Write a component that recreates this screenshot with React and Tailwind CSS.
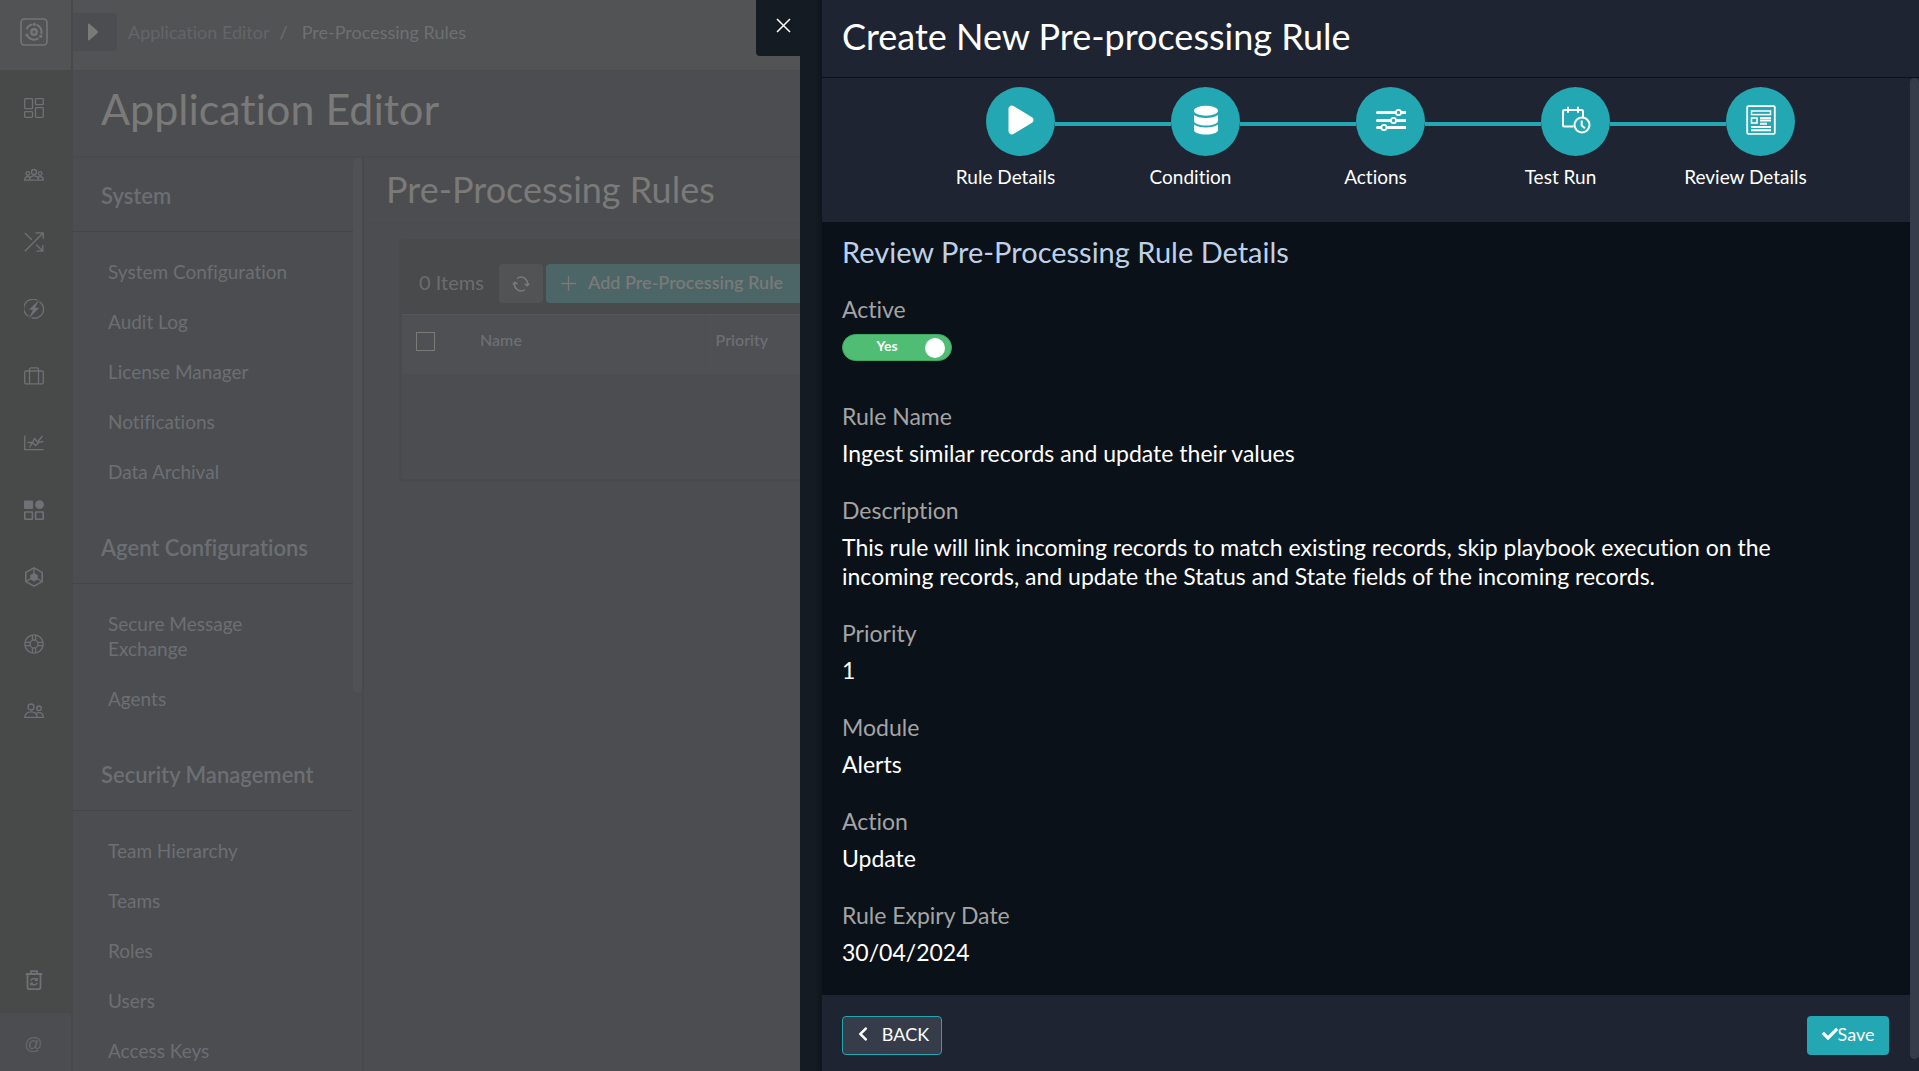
import React from "react";
import { FaChevronLeft, FaCheck } from "react-icons/fa";

function Icon({ children, size = 20, className = "" }) {
  return (
    <svg
      width={size}
      height={size}
      viewBox="0 0 20 20"
      fill="none"
      stroke="currentColor"
      strokeWidth="1.3"
      className={className}
      aria-hidden="true"
    >
      {children}
    </svg>
  );
}

const railItems = [
  {
    label: "Dashboard",
    icon: (
      <Icon>
        <rect x="0.7" y="0.7" width="7.8" height="10" rx="0.8" />
        <rect x="11.5" y="0.7" width="7.8" height="6" rx="0.8" />
        <rect x="0.7" y="13.7" width="7.8" height="5.6" rx="0.8" />
        <rect x="11.5" y="9.7" width="7.8" height="9.6" rx="0.8" />
      </Icon>
    ),
  },
  {
    label: "Queue",
    icon: (
      <Icon>
        <circle cx="10" cy="7" r="2.5" />
        <circle cx="3.8" cy="8.5" r="1.8" />
        <circle cx="16.2" cy="8.5" r="1.8" />
        <path d="M5.5 15.2c0-3 2-4.4 4.500-4.400s4.500 1.400 4.500 4.400zM5.500 15.200H.7c0-2.600 1.300-3.600 3.100-3.600 1 0 1.800.3 2.400.9M14.500 15.200h4.800c0-2.600-1.300-3.600-3.100-3.600-1 0-1.800.3-2.400.9" />
      </Icon>
    ),
  },
  {
    label: "Incident Response",
    icon: (
      <Icon>
        <path d="M.8 19.200 18.800 1.200M11.500.8h7.700v6M.8 1l7 6.800M12 12.500l6.500 6.300M18.800 13v6.200h-6.300" />
      </Icon>
    ),
  },
  {
    label: "Automation",
    icon: (
      <Icon>
        <path d="M4.500 17.300A9 9 0 0 1 13 1.300M15.500 2.700A9 9 0 0 1 7.500 18.700" />
        <path d="M15.500.5 5 10.800h4L4.800 19.500 15.200 8.800H11z" fill="currentColor" stroke="none" />
      </Icon>
    ),
  },
  {
    label: "Resources",
    icon: (
      <Icon>
        <rect x="0.7" y="5" width="18.600" height="12.800" rx="1.200" />
        <path d="M5.500 17.800V3.500c0-1 .7-1.700 1.700-1.700h5.600c1 0 1.700.7 1.700 1.700v14.300" />
      </Icon>
    ),
  },
  {
    label: "Reports",
    icon: (
      <Icon>
        <path d="M.8 2.500v14.200h18.700M3.500 9.500h5l3 3L15.500 9l4-.5M5.500 14.500l3-5 2-4 3 3.500 5-6" />
      </Icon>
    ),
  },
  {
    label: "Widgets",
    icon: (
      <Icon>
        <rect x="0" y="0.500" width="9" height="8.500" rx="0.800" fill="currentColor" stroke="none" />
        <circle cx="15.500" cy="4.700" r="4.400" fill="currentColor" stroke="none" />
        <rect x="0.800" y="12" width="7.600" height="7.200" rx="0.500" strokeWidth="1.600" />
        <rect x="11.600" y="12" width="7.600" height="7.200" rx="0.500" strokeWidth="1.600" />
      </Icon>
    ),
  },
  {
    label: "Content Hub",
    icon: (
      <Icon>
        <path d="M10 .9l8.200 4.500v9.200L10 19.100 1.800 14.600V5.400z" strokeWidth="1.600" />
        <path d="M10 6l3.800 2.100v4.200L10 14.400l-3.800-2.100V8.100z" fill="currentColor" stroke="none" />
        <path d="M10 1v6M2 14.500l5-3M18 14.500l-5-3" />
      </Icon>
    ),
  },
  {
    label: "Help",
    icon: (
      <Icon>
        <circle cx="10" cy="10" r="9.200" />
        <circle cx="10" cy="10" r="4" />
        <path d="M8.400 1v5.200M11.600 1v5.200M8.400 13.800V19M11.600 13.800V19M1 8.400h5.200M1 11.600h5.200M13.800 8.400H19M13.800 11.600H19" />
      </Icon>
    ),
  },
  {
    label: "Users",
    icon: (
      <Icon>
        <circle cx="7" cy="6" r="3" />
        <circle cx="15" cy="7.300" r="2.300" />
        <path d="M.8 16.300c0-3.700 2.700-5.500 6.200-5.500s6.200 1.800 6.200 5.500zM12 12.500c.8-.6 1.800-.9 3-.9 2.500 0 4.200 1.700 4.200 4.700h-6" />
      </Icon>
    ),
  },
];

const sections = [
  {
    title: "System",
    items: ["System Configuration", "Audit Log", "License Manager", "Notifications", "Data Archival"],
  },
  { title: "Agent Configurations", items: ["Secure Message Exchange", "Agents"] },
  {
    title: "Security Management",
    items: ["Team Hierarchy", "Teams", "Roles", "Users", "Access Keys"],
  },
];

const steps = [
  {
    label: "Rule Details",
    icon: (
      <svg width="28" height="32" viewBox="0 0 28 32" fill="currentColor" aria-hidden="true">
        <path d="M1.500 5C1.500 2.300 4.600.7 6.900 2.200L25 13.300c2 1.300 2 4.100 0 5.400L6.900 29.800c-2.300 1.500-5.400-.1-5.400-2.800z" />
      </svg>
    ),
  },
  {
    label: "Condition",
    icon: (
      <svg width="26" height="30" viewBox="0 0 26 30" fill="currentColor" aria-hidden="true">
        <ellipse cx="13" cy="5.700" rx="12" ry="5" />
        <path d="M1 10c2.500 2 7 3 12 3s9.500-1 12-3v6c0 2.600-5.400 4.500-12 4.500S1 18.600 1 16z" />
        <path d="M1 19.500c2.500 2 7 3 12 3s9.500-1 12-3V25c0 2.700-5.400 4.600-12 4.600S1 27.700 1 25z" />
      </svg>
    ),
  },
  {
    label: "Actions",
    icon: (
      <svg width="30" height="24" viewBox="0 0 30 24" fill="none" stroke="currentColor" aria-hidden="true">
        <path d="M1.500 4.500h18M26 4.500h3M1.500 12.500h13M21 12.500h8M1.500 19.500h3M12 19.500h17" strokeWidth="3" strokeLinecap="round" />
        <circle cx="22.500" cy="4.500" r="2.600" strokeWidth="1.800" />
        <circle cx="17.500" cy="12.500" r="2.600" strokeWidth="1.800" />
        <circle cx="8" cy="19.500" r="2.600" strokeWidth="1.800" />
      </svg>
    ),
  },
  {
    label: "Test Run",
    icon: (
      <svg width="30" height="28" viewBox="0 0 30 28" fill="none" stroke="currentColor" strokeWidth="2" aria-hidden="true">
        <path d="M12.500 20.500H3.500c-1 0-1.500-.6-1.500-1.500V5.500C2 4.600 2.500 4 3.500 4h17c1 0 1.500.6 1.500 1.500V11M7 .8v6M17 .8v6" />
        <circle cx="21" cy="19" r="7.500" />
        <path d="M20.700 14.500v5l3.300 2.700" />
      </svg>
    ),
  },
  {
    label: "Review Details",
    icon: (
      <svg width="30" height="30" viewBox="0 0 30 30" fill="none" stroke="currentColor" aria-hidden="true">
        <rect x="1.200" y="1.200" width="27.600" height="27.600" rx="1" strokeWidth="1.800" />
        <rect x="5.500" y="6" width="19" height="3.600" strokeWidth="1.500" />
        <rect x="5.500" y="13" width="5.500" height="5" strokeWidth="1.600" />
        <path d="M14 13h11M14 15.500h11M14 18.700h7M5 22h20M5 25.200h20" strokeWidth="2" />
      </svg>
    ),
  },
];

const fields = [
  ["Rule Name", "Ingest similar records and update their values"],
  [
    "Description",
    "This rule will link incoming records to match existing records, skip playbook execution on the incoming records, and update the Status and State fields of the incoming records.",
  ],
  ["Priority", "1"],
  ["Module", "Alerts"],
  ["Action", "Update"],
  ["Rule Expiry Date", "30/04/2024"],
];

function Rail() {
  return (
    <nav aria-label="Main" className="flex w-[73px] shrink-0 flex-col border-r-2 border-[#48494a] bg-[#484949] text-[#6e7276]">
      <a href="#home" aria-label="Home" className="flex h-[70px] shrink-0 items-center justify-center bg-[#525354] pr-1 pb-1.5 text-[#747677]">
        <svg width="28" height="28" viewBox="0 0 28 28" fill="none" stroke="currentColor" aria-hidden="true">
          <rect x="1" y="1" width="26" height="26" rx="3.500" strokeWidth="1.600" />
          <circle cx="14" cy="14" r="2.700" strokeWidth="2.400" />
          <path d="M12 6.500a7.700 7.700 0 0 0-5.400 5M16.500 6.700a7.700 7.700 0 0 1 4.800 9.500M7.300 17.800a7.700 7.700 0 0 0 11.200 2.400" strokeWidth="2" />
          <circle cx="14.200" cy="6.300" r="1.600" fill="currentColor" stroke="none" />
          <circle cx="20.700" cy="18.300" r="1.600" fill="currentColor" stroke="none" />
          <circle cx="6.900" cy="17" r="1.600" fill="currentColor" stroke="none" />
        </svg>
      </a>
      <ul className="flex flex-col pt-1">
        {railItems.map((item) => (
          <li key={item.label}>
            <a href="#module" aria-label={item.label} className="flex h-[67px] items-center justify-center pr-1">
              {item.icon}
            </a>
          </li>
        ))}
      </ul>
      <a href="#bin" aria-label="Recycle Bin" className="mt-auto flex h-[67px] shrink-0 items-center justify-center pr-1">
        <Icon>
          <path d="M1.800 4h16.400M7 4V1.200h6V4M3.500 4v13.500c0 1 .7 1.700 1.700 1.700h9.600c1 0 1.700-.7 1.700-1.700V4" strokeWidth="1.800" />
          <path d="M6.800 10.700c.5-1.600 1.700-2.200 3.200-2.200s2.300.6 3 1.700M13.200 8v2.400h-2.500M13.200 12.800c-.5 1.600-1.700 2.200-3.200 2.200s-2.300-.6-3-1.700M6.800 15.500v-2.400h2.500" />
        </Icon>
      </a>
      <a href="#contact" aria-label="Contact" className="flex h-[58px] shrink-0 items-center justify-center bg-[#4c4d50] pt-1 pr-1 font-['Liberation_Sans'] text-lg text-[#66686a]">
        @
      </a>
    </nav>
  );
}

function SettingsMenu() {
  return (
    <div className="flex w-[291px] shrink-0 overflow-hidden border-r-2 border-[#48494b]">
      <nav aria-label="Settings" className="min-w-0 flex-1 text-[#6b6f74]">
        {sections.map((section) => (
          <section key={section.title}>
            <h2 className="border-b border-[#444547] pt-[25px] pb-[23px] pl-7 text-[22px] leading-[25px] font-semibold">
              {section.title}
            </h2>
            <ul className="flex flex-col gap-[25px] pt-[27px] pr-12 pb-[26px] pl-[35px] text-[19px] leading-[25px]">
              {section.items.map((item) => (
                <li key={item}>
                  <a href="#setting" className="block">{item}</a>
                </li>
              ))}
            </ul>
          </section>
        ))}
      </nav>
      <div className="h-[535px] w-[9px] shrink-0 rounded-full bg-[#505153]" />
    </div>
  );
}

function RulesPage() {
  return (
    <main className="min-w-0 flex-1 text-[#7a7a79]">
      <h2 className="border-b border-[#4a4b4d] pt-[9px] pb-3 pl-[22px] text-4xl leading-[44px]">Pre-Processing Rules</h2>
      <div className="mt-[15px] mr-8 ml-[35px] rounded border-3 border-[#494a4c]">
        <div className="flex items-center bg-[#494a4b] pt-[22px] pb-[11px] pl-[17px] text-xl leading-[37px]">
          <span className="mr-3 w-[68px] shrink-0 pb-0.5 text-[#6c6d6e]">0 Items</span>
          <button type="button" aria-label="Refresh" className="mr-[3px] flex h-[39px] w-11 shrink-0 items-center justify-center rounded-sm bg-[#525355]">
            <svg width="18" height="18" viewBox="0 0 18 18" fill="none" stroke="currentColor" strokeWidth="1.500" aria-hidden="true">
              <path d="M5 3.500A6.500 6.500 0 0 1 15.300 10M13 14.500A6.500 6.500 0 0 1 2.700 8M.8 9.500 2.900 7.200l2.600 2M17.300 8.500l-2.100 2.300-2.600-2" />
            </svg>
          </button>
          <button type="button" className="flex h-[39px] shrink-0 items-center gap-3 rounded-sm bg-[#4c6566] pr-6 pl-[15px] text-lg font-semibold">
            <svg width="15" height="15" viewBox="0 0 15 15" stroke="currentColor" strokeWidth="1.300" aria-hidden="true">
              <path d="M7.500 0v15M0 7.500h15" />
            </svg>
            <span className="pb-1">Add Pre-Processing Rule</span>
          </button>
        </div>
        <table className="w-full table-fixed border-t border-[#55565a] text-left text-base text-[#6b6f74]">
          <thead className="bg-[#4f5053]">
            <tr className="h-[59px]">
              <th className="w-16 pb-1.5 pl-[14px]">
                <input type="checkbox" aria-label="Select all" className="block size-[19px] appearance-none border border-[#7a7a79]" />
              </th>
              <th className="w-[239px] border-r border-[#4d4e51] pb-2 pl-[14px] font-semibold">Name</th>
              <th className="pb-2 pl-[10px] font-semibold">Priority</th>
            </tr>
          </thead>
          <tbody>
            <tr className="h-[105px]">
              <td colSpan={3} />
            </tr>
          </tbody>
        </table>
      </div>
    </main>
  );
}

function Drawer() {
  return (
    <aside
      role="dialog"
      aria-label="Create New Pre-processing Rule"
      className="absolute inset-y-0 right-0 flex w-[1119px] max-w-full bg-[#141b22] text-white"
    >
      <button
        type="button"
        aria-label="Close"
        className="absolute top-0 -left-11 flex h-14 w-11 items-center justify-center rounded-bl-sm bg-[#141b22] pb-1.5 pl-2.5"
      >
        <svg width="15" height="15" viewBox="0 0 15 15" stroke="currentColor" strokeWidth="1.500" aria-hidden="true">
          <path d="M1 1l13 13M14 1L1 14" />
        </svg>
      </button>
      <div className="w-[22px] shrink-0 bg-linear-to-r from-[#141b22] from-70% to-[#0f151b]" />
      <div className="flex min-w-0 flex-1 flex-col">
        <header className="shrink-0 border-b border-[#0b1118] bg-[#1e2431] pt-[14px] pb-[19px] pl-5">
          <h1 className="text-4xl leading-[44px]">Create New Pre-processing Rule</h1>
        </header>
        <div className="flex min-h-0 flex-1 bg-[#1e2431]">
          <div className="flex min-w-0 flex-1 flex-col">
            <ol className="flex h-36 shrink-0 pt-[9px] pr-[72px] pl-[91px]">
              {steps.map((step, i) => (
                <li key={step.label} className="flex flex-1 flex-col">
                  <div className="-mr-[15px] ml-[15px] flex items-center">
                    <span className={i === 0 ? "h-1 flex-1" : "mt-1 h-1 flex-1 bg-[#23a7b2]"} />
                    <span className="flex size-[69px] items-center justify-center rounded-full bg-[#23a7b2] pb-1">{step.icon}</span>
                    <span className={i === steps.length - 1 ? "h-1 flex-1" : "mt-1 h-1 flex-1 bg-[#23a7b2]"} />
                  </div>
                  <span className="mt-[7px] text-center text-[19px] leading-7">{step.label}</span>
                </li>
              ))}
            </ol>
            <div className="min-h-0 flex-1 overflow-hidden bg-[#0b1118] px-5 pt-3">
              <h2 className="text-[29px] leading-9 text-[#bfd0e6]">Review Pre-Processing Rule Details</h2>
              <div className="mt-[25px] mb-[41px] text-[23px] leading-[29px]">
                <label htmlFor="active" className="block text-[#a3a4a5]">Active</label>
                <span className="relative mt-[10px] flex h-[27px] w-[110px] items-center rounded-full border border-[#3ea862] bg-[#4fbd74]">
                  <input id="active" type="checkbox" defaultChecked className="absolute inset-0 size-full cursor-pointer appearance-none rounded-full" />
                  <span className="flex-1 pb-1 pl-1.5 text-center text-sm leading-5 font-bold">Yes</span>
                  <span className="mr-[6px] size-5 rounded-full bg-white" />
                </span>
              </div>
              <dl className="flex flex-col gap-7 text-[23px] leading-[29px]">
                {fields.map(([name, value]) => (
                  <div key={name} className="flex flex-col gap-2 pr-12">
                    <dt className="text-[#a3a4a5]">{name}</dt>
                    <dd>{value}</dd>
                  </div>
                ))}
              </dl>
            </div>
            <footer className="flex h-[76px] shrink-0 items-start justify-between px-5 pt-[21px] text-lg">
              <button type="button" className="flex h-[39px] w-[100px] items-center justify-center gap-[11px] rounded-sm border border-[#23a7b2] bg-[#363c49] pb-1">
                <FaChevronLeft className="size-4" aria-hidden="true" />
                BACK
              </button>
              <button type="button" className="mr-px flex h-[39px] w-[82px] items-center justify-center rounded-sm bg-[#23a7b2] pb-1">
                <FaCheck className="size-4" aria-hidden="true" />
                Save
              </button>
            </footer>
          </div>
          <div className="mb-3 w-[9px] shrink-0 rounded-full bg-[#363c49]" />
        </div>
      </div>
    </aside>
  );
}

export default function App() {
  return (
    <div className="relative flex h-screen overflow-hidden bg-[#4c4d50] font-[Lato,sans-serif] [font-variant-ligatures:none]">
      <Rail />
      <div className="flex min-w-0 flex-1 flex-col">
        <header className="flex h-[71px] shrink-0 items-center border-b border-[#4a4b4c] bg-[#525354] pb-1.5 text-lg">
          <button type="button" aria-label="Expand menu" className="flex h-[38px] w-11 items-center justify-center rounded-r bg-[#4c4d50] pr-1 text-[#7a7a79]">
            <svg width="12" height="18" viewBox="0 0 12 18" fill="currentColor" aria-hidden="true">
              <path d="M1 1.500C1 .5 2 .3 2.600.9l8 7.200c.6.500.6 1.200 0 1.800l-8 7.200c-.7.600-1.600.3-1.600-.6z" />
            </svg>
          </button>
          <nav aria-label="Breadcrumb" className="flex gap-2.5 pl-[11px]">
            <a href="#editor" className="text-[#626569]">Application Editor</a>
            <span className="text-[#6b6f74]">/</span>
            <span className="pl-1 text-[#6e7071]">Pre-Processing Rules</span>
          </nav>
        </header>
        <div className="shrink-0 border-b-2 border-[#494a4c] pt-3 pb-[21px] pl-7">
          <h1 className="text-[43px] leading-[52px] text-[#7a7a79]">Application Editor</h1>
        </div>
        <div className="flex min-h-0 flex-1">
          <SettingsMenu />
          <RulesPage />
        </div>
      </div>
      <Drawer />
    </div>
  );
}
